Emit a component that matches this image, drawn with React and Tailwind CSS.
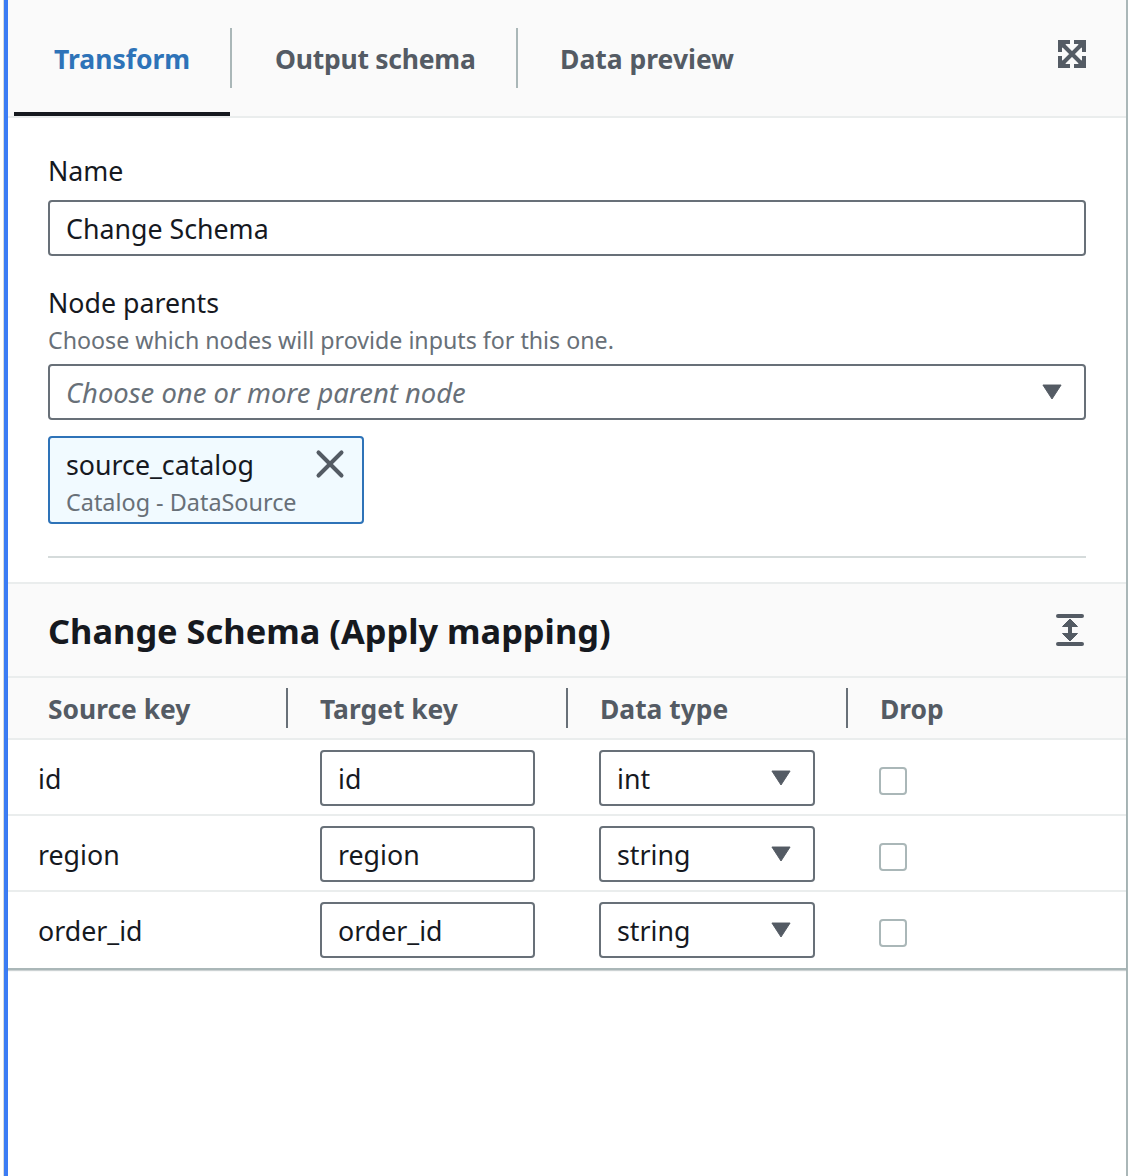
import { X } from 'lucide-react'

const ROWS = [
  { key: 'id', type: 'int' },
  { key: 'region', type: 'string' },
  { key: 'order_id', type: 'string' },
]

function Caret() {
  return (
    <svg width="20" height="16" viewBox="0 0 22 16" preserveAspectRatio="none" className="block text-[#545b64] shrink-0">
      <path d="M1 1h20L11 15z" fill="currentColor" stroke="currentColor" strokeWidth="1" strokeLinejoin="round" />
    </svg>
  )
}

function ExpandIcon() {
  return (
    <svg width="28" height="28" viewBox="0 0 28 28" className="block text-[#545b64]">
      <path fill="currentColor" d="M0 0h12L0 12zM16 0h12v12zM0 16l12 12H0zM28 16v12H16z" />
      <path fill="currentColor" d="M0 0h12v4H4v8H0zM16 0h12v12h-4V4h-8zM0 16h4v8h8v4H0zM24 16h4v12H16v-4h8z" />
      <path fill="none" stroke="currentColor" strokeWidth="4" d="M4 4l20 20M24 4L4 24" />
    </svg>
  )
}

function ResizeIcon() {
  return (
    <svg width="28" height="32" viewBox="0 0 28 32" className="block text-[#545b64]">
      <path d="M2 2h24M2 30h24" stroke="currentColor" strokeWidth="4" strokeLinecap="round" />
      <path d="M14 7v18" stroke="currentColor" strokeWidth="4" />
      <path d="M14 5l7.5 7.5H6.5zM14 27l7.5-7.5H6.5z" fill="currentColor" stroke="currentColor" strokeWidth="1" strokeLinejoin="round" />
    </svg>
  )
}

function Field({ children, className = '' }) {
  return (
    <div className={`h-14 pt-[2px] flex items-center border-2 border-[#687078] rounded-[4px] bg-white text-[#16191f] ${className}`}>
      {children}
    </div>
  )
}

function HeaderCell({ label, className = '', divider = true }) {
  return (
    <div className={`relative flex items-center h-full pt-[2px] text-[26.4px] font-bold text-[#545b64] ${className}`}>
      {label}
      {divider && <span className="absolute right-0 top-[10px] h-10 w-[2px] bg-[#687078]" />}
    </div>
  )
}

export default function App() {
  return (
    <div className="w-[1130px] h-[1176px] bg-white pl-[3px] overflow-hidden text-[#16191f] text-[26.75px] leading-none" style={{ fontFamily: '"Noto Sans", sans-serif' }}>
      <div className="h-full w-[1125px] border-l border-l-[#d5dbdb] flex">
        <div className="h-full w-[1124px] border-l-4 border-l-[#3b7cf4] border-r-2 border-r-[#aab7b8] flex flex-col">
          <div className="h-[118px] shrink-0 bg-[#fafafa] border-b-2 border-[#eaeded] pl-[6px] pr-[40px] flex items-start justify-between">
            <div className="flex items-start text-[26.5px] font-bold text-[#545b64]">
              <div className="h-[116px] w-[216px] border-b-4 border-[#16191f] pl-[40px] pt-[46px] text-[#2e73b8]">Transform</div>
              <span className="w-[2px] h-[60px] mt-[28px] bg-[#aab7b8]" />
              <div className="w-[284px] pl-[43px] pt-[46px] tracking-[-0.25px]">Output schema</div>
              <span className="w-[2px] h-[60px] mt-[28px] bg-[#aab7b8]" />
              <div className="pl-[42px] pt-[46px]">Data preview</div>
            </div>
            <div className="mt-[40px]"><ExpandIcon /></div>
          </div>

          <div className="px-[40px] pt-[36px]">
            <div className="h-8 pt-[2px] flex items-center">Name</div>
            <Field className="mt-[14px] px-4">Change Schema</Field>
            <div className="mt-[30px] h-8 pt-[2px] flex items-center">Node parents</div>
            <div className="mt-[8px] h-[30px] flex items-center text-[23.2px] text-[#687078]">Choose which nodes will provide inputs for this one.</div>
            <Field className="mt-[8px] px-4 justify-between">
              <span className="italic text-[27.4px] text-[#687078]">Choose one or more parent node</span>
              <span className="mr-[6px] mb-[2px]"><Caret /></span>
            </Field>
            <div className="relative mt-4 w-[316px] h-[88px] border-2 border-[#2e73b8] rounded-[4px] bg-[#f1faff] pl-4 pt-[11px]">
              <div className="h-8 flex items-center">source_catalog</div>
              <div className="mt-[8px] h-7 flex items-center text-[23.4px] text-[#687078]">Catalog - DataSource</div>
              <X size={46} strokeWidth={2.1} className="absolute right-[9px] top-[3px] text-[#545b64]" />
            </div>
            <div className="mt-8 h-[2px] bg-[#d5dbdb]" />
          </div>

          <div className="mt-6 h-[96px] shrink-0 bg-[#fafafa] border-t-2 border-b-2 border-[#eaeded] pl-[40px] pr-[42px] flex items-center justify-between">
            <h2 className="pt-[2px] text-[34.4px] font-bold">Change Schema (Apply mapping)</h2>
            <ResizeIcon />
          </div>

          <div className="border-b-2 border-[#aab7b8] shadow-[0_1px_1px_rgba(0,28,36,0.2)]">
            <div className="h-[62px] bg-[#fafafa] border-b-2 border-[#eaeded] grid grid-cols-[280px_280px_280px_1fr]">
              <HeaderCell label="Source key" className="pl-[40px]" />
              <HeaderCell label="Target key" className="pl-[32px]" />
              <HeaderCell label="Data type" className="pl-[32px]" />
              <HeaderCell label="Drop" className="pl-[32px]" divider={false} />
            </div>
            {ROWS.map((row, i) => (
              <div key={row.key} className={`h-[76px] pt-[2px] grid grid-cols-[280px_280px_280px_1fr] items-center border-b-2 ${i < 2 ? 'border-[#eaeded]' : 'border-transparent'}`}>
                <div className="pl-[30px] pt-[2px]">{row.key}</div>
                <div className="pl-[32px]"><Field className="w-[215px] px-4">{row.key}</Field></div>
                <div className="pl-[31px]">
                  <Field className="w-[216px] px-4 justify-between">
                    <span>{row.type}</span>
                    <span className="mr-[6px] mb-[2px]"><Caret /></span>
                  </Field>
                </div>
                <div className="pl-[31px]">
                  <div className="w-7 h-7 mt-[6px] border-2 border-[#aab7b8] rounded-[4px] bg-white" />
                </div>
              </div>
            ))}
          </div>
        </div>
      </div>
    </div>
  )
}
